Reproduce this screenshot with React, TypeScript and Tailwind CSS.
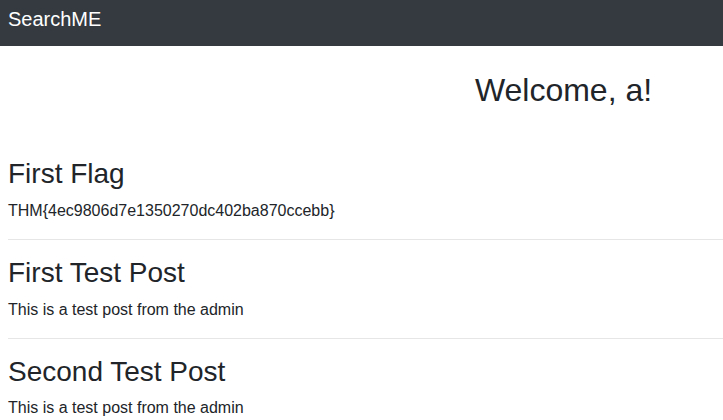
const posts = [
  { title: 'First Flag', body: 'THM{4ec9806d7e1350270dc402ba870ccebb}' },
  { title: 'First Test Post', body: 'This is a test post from the admin' },
  { title: 'Second Test Post', body: 'This is a test post from the admin' },
];

function Navbar() {
  return (
    <nav className="h-[46px] bg-[#343a40] px-2 pt-[4px]">
      <span className="text-[20px] leading-[30px] text-white">SearchME</span>
    </nav>
  );
}

export default function App() {
  return (
    <div className="min-h-screen bg-white text-[#212529] font-['Liberation_Sans',Arial,sans-serif]">
      <Navbar />
      <div className="grid grid-cols-[404px_1fr] mt-[25px]">
        <div />
        <h2 className="text-center text-[32px] leading-[1.2] font-normal">Welcome, a!</h2>
      </div>
      <div className="pl-2 mt-[48px]">
        {posts.map((post, i) => (
          <div key={post.title}>
            {i > 0 && <hr className="my-4 border-t border-[#e6e6e6]" />}
            <h3 className="text-[28px] leading-[1.2] font-normal mb-2">{post.title}</h3>
            <p className="text-base leading-6">{post.body}</p>
          </div>
        ))}
      </div>
    </div>
  );
}
